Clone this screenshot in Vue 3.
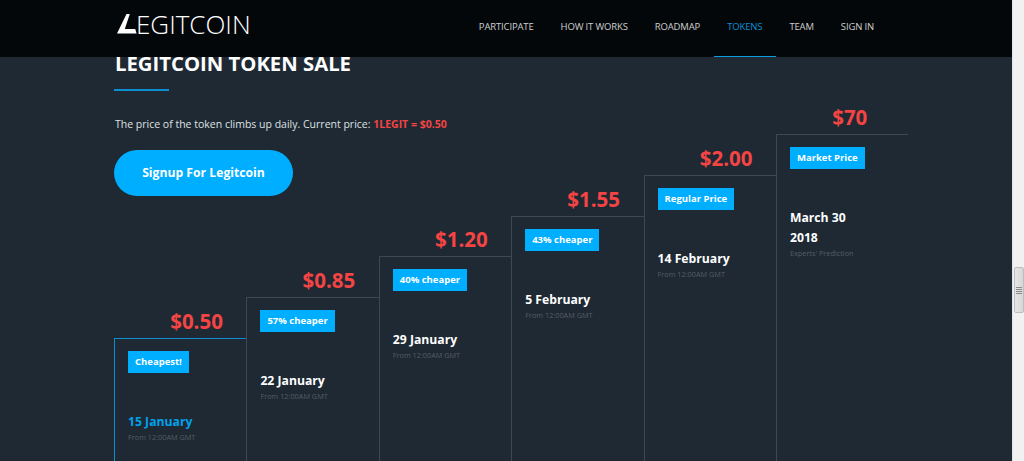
<template>
  <div class="page">
    <div class="content">
      <header class="topbar">
        <div class="wrap topbar-in">
          <a class="logo">
            <svg class="logo-mark" width="20" height="20" viewBox="0 0 20 20">
              <path d="M9.5 0H12.8L7.8 15H18.2L19.6 19.5H0Z" fill="#fff" />
            </svg>
            <span>EGITCOIN</span>
          </a>
          <nav class="nav">
            <a v-for="item in nav" :key="item" :class="{ active: item === 'TOKENS' }">{{ item }}</a>
          </nav>
        </div>
      </header>
      <section class="wrap sale">
        <h2>LEGITCOIN TOKEN SALE</h2>
        <div class="rule"></div>
        <p class="lead">The price of the token climbs up daily. Current price: <b>1LEGIT = $0.50</b></p>
        <a class="signup">Signup For Legitcoin</a>
        <div class="stairs">
          <div v-for="(s, i) in steps" :key="s.price" class="step" :class="{ first: i === 0, last: i === 5 }">
            <div class="price">{{ s.price }}</div>
            <div class="box" :style="{ height: 162 + i * 40.8 + 'px' }">
              <span class="tag">{{ s.tag }}</span>
              <div class="date">{{ s.date }}</div>
              <div class="note">{{ s.note }}</div>
            </div>
          </div>
        </div>
      </section>
    </div>
    <div class="scrollbar">
      <div class="thumb"><i></i><i></i><i></i><i></i></div>
    </div>
  </div>
</template>

<script setup>
const nav = ['PARTICIPATE', 'HOW IT WORKS', 'ROADMAP', 'TOKENS', 'TEAM', 'SIGN IN'];

const gmt = 'From 12:00AM GMT';
const steps = [
  { price: '$0.50', tag: 'Cheapest!', date: '15 January', note: gmt },
  { price: '$0.85', tag: '57% cheaper', date: '22 January', note: gmt },
  { price: '$1.20', tag: '40% cheaper', date: '29 January', note: gmt },
  { price: '$1.55', tag: '43% cheaper', date: '5 February', note: gmt },
  { price: '$2.00', tag: 'Regular Price', date: '14 February', note: gmt },
  { price: '$70', tag: 'Market Price', date: 'March 30 2018', note: "Experts' Prediction" },
];
</script>

<style scoped>
.page {
  display: flex;
  width: 1024px;
  height: 461px;
  overflow: hidden;
  background: #1e2933;
  font-family: "Open Sans", sans-serif;
  color: #fff;
}

.content {
  width: 1012px;
  flex: none;
}

.wrap {
  width: 794px;
  margin-left: 114px;
}

.topbar {
  height: 57px;
  background: #04070a;
  position: relative;
  z-index: 2;
}

.topbar-in {
  display: flex;
  justify-content: space-between;
  height: 57px;
}

.logo {
  display: flex;
  align-items: flex-start;
  padding: 11px 0 0 3px;
  font-weight: 300;
  font-size: 26px;
  line-height: 27px;
}

.logo-mark {
  margin: 3px -1px 0 0;
}

.nav {
  display: flex;
  margin-right: 20.5px;
}

.nav a {
  padding: 0 13.5px;
  height: 57px;
  box-sizing: border-box;
  line-height: 53px;
  font-size: 9.5px;
  letter-spacing: -0.15px;
  color: #cfcfcf;
  white-space: nowrap;
}

.nav a.active {
  color: #0b8fd2;
  border-bottom: 1px solid #0b9be0;
}

.sale h2 {
  margin: -7.5px 0 0 1px;
  font-size: 20.3px;
  line-height: 27px;
  font-weight: 700;
  position: relative;
  z-index: 1;
}

.rule {
  width: 55px;
  height: 2px;
  margin: 12.5px 0 0;
  background: #0b8fd2;
}

.lead {
  margin: 25px 0 0 1px;
  font-size: 10.5px;
  line-height: 16px;
  color: #dfe1e3;
}

.lead b {
  color: #f44444;
}

.signup {
  display: block;
  width: 179px;
  height: 46px;
  margin: 18px 0 0;
  border-radius: 23px;
  background: #00aeff;
  text-align: center;
  font-size: 12.2px;
  font-weight: 700;
  line-height: 46px;
}

.stairs {
  display: flex;
  align-items: flex-end;
  height: 305px;
  margin-top: -1px;
  position: relative;
}

.step {
  width: 132.4px;
  flex: none;
}

.price {
  padding-right: 23.5px;
  text-align: right;
  font-size: 20.5px;
  font-weight: 700;
  line-height: 30px;
  color: #f44444;
  margin-bottom: 2px;
}

.last .price {
  padding-right: 41px;
}

.box {
  box-sizing: border-box;
  padding: 9px 13px 0;
  border-top: 1px solid #3f4752;
  border-left: 1px solid #3f4752;
}

.first .box {
  border-color: #0b8fd2;
}

.tag {
  display: inline-block;
  height: 22px;
  padding: 0 7px;
  background: #00aeff;
  font-size: 9.5px;
  font-weight: 700;
  line-height: 22px;
}

.date {
  margin-top: 39px;
  font-size: 12.2px;
  font-weight: 700;
  line-height: 20px;
  padding-right: 20px;
}

.first .date {
  color: #00a2ec;
}

.note {
  margin-top: 0;
  font-size: 7.3px;
  line-height: 11px;
  color: #565d66;
}

.scrollbar {
  width: 12px;
  flex: none;
  position: relative;
  background: #f1f1f1;
  border-left: 1px solid #e4e4e4;
  box-sizing: border-box;
}

.thumb {
  position: absolute;
  top: 267px;
  left: 1px;
  width: 10px;
  height: 46px;
  box-sizing: border-box;
  border: 1px solid #bdbdbd;
  border-radius: 2px;
  background: linear-gradient(90deg, #e6e6e6, #d6d6d6);
  display: flex;
  flex-direction: column;
  justify-content: center;
  align-items: center;
  gap: 1px;
}

.thumb i {
  width: 6px;
  height: 1px;
  background: #8a8a8a;
}
</style>
